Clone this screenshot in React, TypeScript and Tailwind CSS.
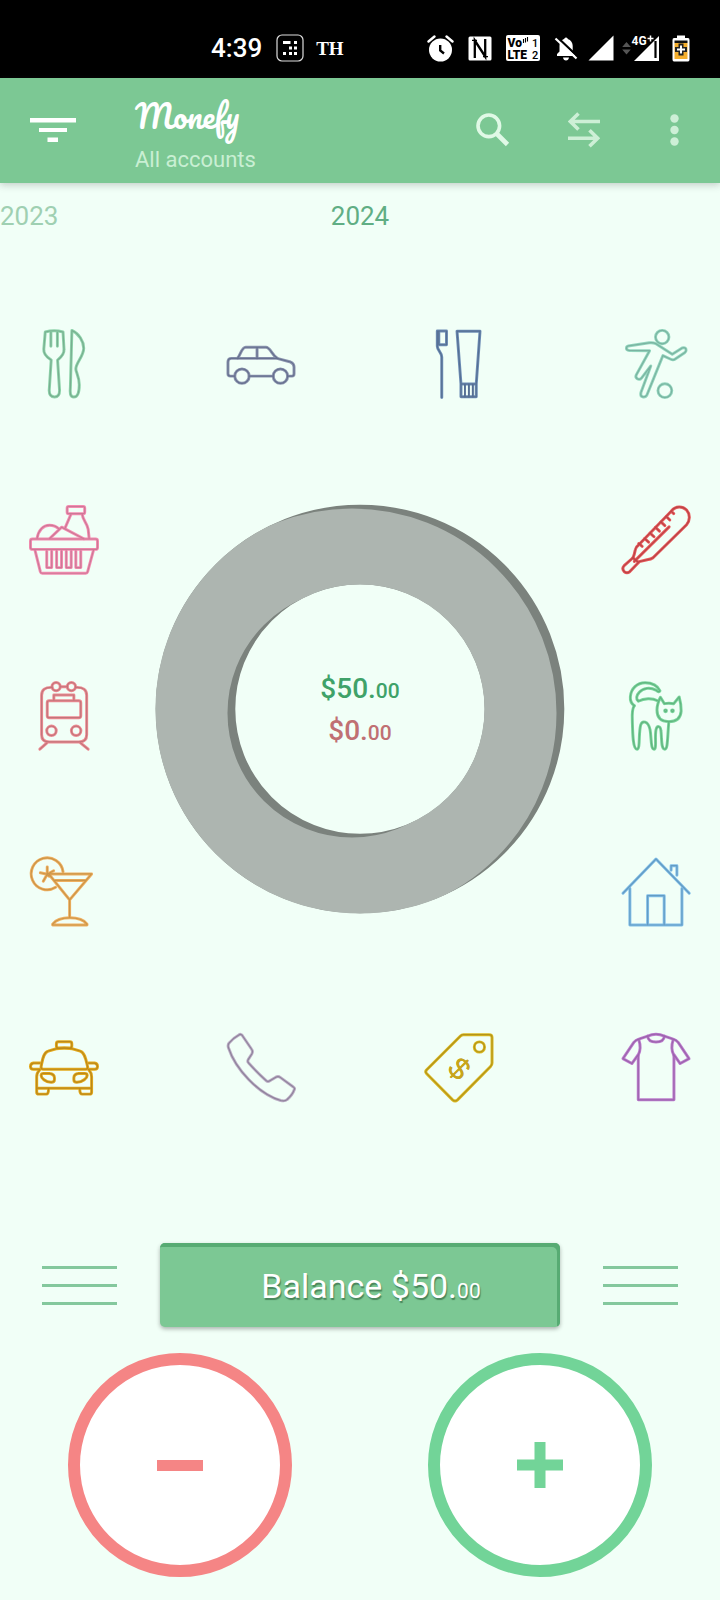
import type { ReactNode } from "react";

type IconProps = { label: string; light: string; dark: string; children: ReactNode };

function CategoryButton({ label, light, dark, children }: IconProps) {
  return (
    <button type="button" aria-label={label} className="block h-[70px] w-[70px] shrink-0">
      <svg viewBox="-0.5 -0.5 71 71" className="h-full w-full overflow-visible" fill="none" strokeLinecap="round" strokeLinejoin="round">
        <g stroke={light} strokeWidth="3">{children}</g>
        <g stroke={dark} strokeWidth="1.2">{children}</g>
      </svg>
    </button>
  );
}

function Food() {
  return (
    <CategoryButton label="Food" light="#8fd4ab" dark="#78ae90">
      <path d="M16 2.500Q25 0 34 2.500L35 20Q35.500 25.500 28.500 31L30.500 62Q30.500 68.500 25.500 68.500Q20 68.500 20 62L22 31Q14 26 14.500 20Z" />
      <path d="M21.700 3V17M28.300 3V17" />
      <path d="M43 1C50 4 55 12 55 19C55 27 47 34 47 40C47 43 50.500 48 50.500 56C50.500 64 49 68.500 45 68.500C41 68.500 41 64 41.500 58Z" />
    </CategoryButton>
  );
}

function Car() {
  return (
    <CategoryButton label="Car" light="#8e97b0" dark="#66708f">
      <path d="M8 47.300H4Q1.500 47.300 1.500 45V33Q1.500 29.300 5 29.300H51.300L65 33Q68.500 34.500 68.500 38V45Q68.500 47.300 66.500 47.300H62M23 47.300H47.400" />
      <path d="M11.300 29C14 26 15.500 18 19.500 18H40C44.500 18 46 26 51.300 29M31 18V29" />
      <circle cx="15.700" cy="47.300" r="7.300" />
      <circle cx="54.700" cy="47.300" r="7.300" />
    </CategoryButton>
  );
}

function Toiletry() {
  return (
    <CategoryButton label="Toiletry" light="#6e8eb6" dark="#566f93">
      <path d="M13 1.500H22.300V15.500H14.500V1.500M13 1.500V17C13 21 17.500 23 17.500 28V69" />
      <path d="M33 1.700H56.300L52.500 55.300V68.300H37V55.300Z M37 55.300H52.500" />
      <path d="M41 56V68M45 56V68M49 56V68" strokeWidth="1.800" />
    </CategoryButton>
  );
}

function Sports() {
  return (
    <CategoryButton label="Sports" light="#93d6be" dark="#7ab3a1">
      <circle cx="41.300" cy="7.700" r="6.800" />
      <circle cx="44" cy="62" r="7" />
      <path d="M7 16.700L28 13.500Q32 13 35 14.500L51.500 25L61.500 18.800Q65.500 17.500 65.500 21Q65.500 22.500 64 23.500L54.500 30Q52.500 31.500 50 30.200L42 26.500L26 66Q24.500 69 21.500 68.300Q18.800 67.500 19.700 64L29.700 37L20.500 49Q18.500 51.500 16 50Q13.800 48.500 15 46L28.500 21.500L8 21.300Q5 21 5 19Q5 17 7 16.700Z" />
    </CategoryButton>
  );
}

function Groceries() {
  return (
    <CategoryButton label="Groceries" light="#f48cb1" dark="#cd7896">
      <rect x="38.200" y="1" width="17.800" height="7.300" rx="1.500" />
      <path d="M42 9L36 23M53.500 9C54 15 58.500 18 59.500 24L60.500 33.500" />
      <path d="M7.700 33.300C9 25 14 20 20.300 20C24 20 27 21 29.500 23.500M20.500 33.500L32.700 22L55 33.700" />
      <rect x="1" y="34" width="68" height="10.500" rx="2" />
      <path d="M5.500 45L11 67Q11.500 68.700 13 68.700H57Q58.500 68.700 59 67L65 45" />
      <path d="M17.500 46V63H22.500V46M27.500 46V63H32.500V46M37.300 46V63H42.300V46M47 46V63H52V46" />
    </CategoryButton>
  );
}

function Health() {
  return (
    <CategoryButton label="Health" light="#e8595b" dark="#bb4447">
      <path d="M17.300 40L50.700 5.500C55 0 62 .5 66 4.500C70 9 69.500 15.500 66 19.500L32 53Q30 54.500 26 55L18 57L8.500 67Q5.500 69.500 2.700 67Q0 64 2.700 61L11.700 53Q13 50 14 45Q14.500 42 17.300 40Z" />
      <path d="M48.300 21.700L13 56.700M11.500 53L17 57.500" />
      <path d="M17.500 38.500L21 41.500M23.500 33.500L27.500 37.200M29 28L33 31.700M34.500 22.200L38.500 26M40 16.700L44 20.400M45.500 11.200L49 14.700M50.500 6L53 8.200" />
    </CategoryButton>
  );
}

function Transport() {
  return (
    <CategoryButton label="Transport" light="#ee8b92" dark="#c2757b">
      <path d="M23 6Q12.300 5.500 12.300 14V54Q12.300 61.300 20 61.300H50Q58 61.300 58 54V14Q58 5.500 47 6M31.300 5.300H38.300" />
      <circle cx="27" cy="5.200" r="4.200" />
      <circle cx="42.500" cy="5.200" r="4.200" />
      <path d="M24.700 19V13.700H45V19" />
      <rect x="18" y="19.500" width="34" height="17.200" rx="2" />
      <circle cx="22.300" cy="50" r="4.800" />
      <circle cx="47.300" cy="50" r="4.800" />
      <path d="M17.700 62.300L10.500 68.700M51.700 62.300L59.500 68.700" />
    </CategoryButton>
  );
}

function Pets() {
  return (
    <CategoryButton label="Pets" light="#7ad59c" dark="#62b580">
      <path d="M13 24.500C9.500 22 8.700 19 9 15.500C9.500 7 16 1.200 24 1.200C31 1.200 37 4.500 39 9.500Q38 11.500 35 8.800C29 5.500 22 6.500 18 11C15 14 14.500 18 17 20C23 17 31 16.500 36.500 19.500" />
      <path d="M13 24.500C10.500 28 10.700 34 11 40C11.300 52 11.500 68.700 15.700 68.700C19.300 68.700 17 53 19.500 44C21 39.500 27 39.500 29 49C30.500 57 29.500 68.700 33 68.700C36 68.700 33.500 56 35 49C36 44.500 39.500 44.500 40 50C41 58 40 68.700 44 68.700C47 68.700 46.500 58 48 41" />
      <path d="M39.500 16L43.500 22.500Q48 21.500 53 22.500L58.500 15.700C60 21 60.700 25 60.500 30C60 37 56 40.700 48 40.700C40.500 40.700 36 37 36 29C36 24 37.500 20 39.500 16Z" />
      <circle cx="44.700" cy="29.700" r="0.900" />
      <circle cx="51.700" cy="29.700" r="0.900" />
    </CategoryButton>
  );
}

function Drinks() {
  return (
    <CategoryButton label="Drinks" light="#efb060" dark="#cc9548">
      <path d="M34 14.500A16.200 16.200 0 1 0 26.500 30.300" />
      <path d="M18 17V9.500M18 17L11 15.500M18 17L14 24M18 17L24.500 13.500M18 17L20 19" />
      <path d="M19.500 16.700H63L40.700 43L19.500 16.700M25.500 23.300H57M40.700 43V60.700" />
      <path d="M23.500 67.500C30 59 52 59 58.300 67.500V68.500H23.500Z" />
    </CategoryButton>
  );
}

function House() {
  return (
    <CategoryButton label="House" light="#80bfe8" dark="#649bc4">
      <path d="M1.500 36.300L35 1.500L68.700 36.300M8.500 31.500V68.500H61.300V31.500" />
      <path d="M26.500 68V38.700H43.300V68M50.300 13V8.300H56.200V18" />
    </CategoryButton>
  );
}

function Taxi() {
  return (
    <CategoryButton label="Taxi" light="#e4aa1c" dark="#bb881a">
      <rect x="27.300" y="8.300" width="15.600" height="6.500" rx="2" />
      <path d="M11.700 34C13 28 13.500 19.500 19 17.800C29 14 41.500 14 51.500 17.800C56.500 19.500 57.500 28 59 34Q59 36.300 57 36.300H14Q11.700 36.300 11.700 34Z" />
      <path d="M10.500 30H4Q1 30.500 1 33.500Q1 36.300 4 36.300H10M60 30H66Q69 30.500 69 33.500Q69 36.300 66 36.300H60" />
      <path d="M10.500 36.500Q7.300 40 7.300 44V55.500H63V44Q63 40 60 36.500M7.300 55V59.500Q7.300 61.500 9.500 61.500H17Q19.300 61.500 19.300 56M63 55V59.500Q63 61.500 61 61.500H53.500Q51 61.500 51 56" />
      <path d="M14 40.500H20Q25.300 41 25.300 45V47Q25.300 49.500 22 49.500C16 49.500 11.800 45 11.800 42.500Q12 40.500 14 40.500ZM56 40.500H50Q45 41 45 45V47Q45 49.500 48 49.500C54 49.500 58.500 45 58.500 42.500Q58.500 40.500 56 40.500Z" />
    </CategoryButton>
  );
}

function Phone() {
  return (
    <CategoryButton label="Communications" light="#bdb0c6" dark="#8f829c">
      <path d="M12.500 1.500Q14.500 0 16 2L25.500 16Q27 18 25.800 20.500L22 26.500Q21 28.500 22.500 30Q31 39.500 40.500 48Q42 49.300 44 48L50 44.300Q52.500 43 54.500 44.500L67.500 54Q70 55.500 68.500 57.500Q67 62 61.500 67Q59.500 69 55 68C32 61 9 36 2 14.500Q1 11.500 2.800 9.500Q7 4.500 12.500 1.500Z" />
    </CategoryButton>
  );
}

function Bills() {
  return (
    <CategoryButton label="Bills" light="#dcba20" dark="#b3941c">
      <path d="M39.500 1.200H65.500Q68.500 1.200 68.500 4V30Q68.500 32 67 33.500L33.500 67.300Q31 69.500 28.500 67.300L2 40.500Q.5 38.700 2 37L36.500 2.500Q37.800 1.200 39.500 1.200Z" />
      <circle cx="55.700" cy="13.700" r="5.200" />
      <text x="35" y="46" transform="rotate(45 35 36)" textAnchor="middle" fontFamily="Liberation Sans" fontSize="31" fill="#c7a51b" stroke="none">$</text>
    </CategoryButton>
  );
}

function Clothes() {
  return (
    <CategoryButton label="Clothes" light="#bd7dce" dark="#9c64ad">
      <path d="M26.500 2.700Q35 -1.300 43.500 2.700Q43 8.700 35 8.700Q27 8.700 26.500 2.700Z" />
      <path d="M26.500 2.700L17.500 5.700Q14.500 6.500 12.500 9L1.500 25.500L10.500 30.500L17 21.500V67.300H53.200V21.500L59.500 30.500L68.500 25.500L57.500 9Q55.500 6.500 52.500 5.700L43.500 2.700" />
      <path d="M17.500 6Q20.500 15 17 22M52.500 6Q49.500 15 53 22" />
    </CategoryButton>
  );
}

function StatusBar() {
  return (
    <div className="flex h-[78px] items-center bg-black pt-[18px] pr-[30px] pl-[211px] text-white">
      <span className="text-[26px] leading-none font-medium">4:39</span>
      <svg viewBox="0 0 28 28" className="ml-[14px] h-7 w-7" fill="#fff">
        <rect x="1" y="1" width="26" height="26" rx="5" fill="none" stroke="#ddd" strokeWidth="1.200" />
        <path d="M7 7h7.500v3H7zM18 7h3v3h-3zM13 12.500h3v3h-3zM18 12.500h3v3h-3zM7 18h3v3H7zM13 18h3v3h-3zM18 18h3v3h-3z" />
      </svg>
      <span className="ml-3 font-['Liberation_Serif',serif] text-[19px] leading-none font-bold">TH</span>
      <div className="ml-auto flex items-center gap-[10px]">
        <div className="flex items-center gap-[14px]">
          <svg viewBox="0 0 27 27" className="h-[27px] w-[27px]">
            <circle cx="13.500" cy="15" r="11.500" fill="#fff" />
            <path d="M1.500 6.500L7.500 1.500M25.500 6.500L19.500 1.500" stroke="#fff" strokeWidth="2.400" strokeLinecap="round" />
            <path d="M13.200 10V15.500L17 18.500" stroke="#000" strokeWidth="2.400" fill="none" />
          </svg>
          <svg viewBox="0 0 24 25" className="h-[25px] w-6" fill="none">
            <rect x=".5" y=".5" width="23" height="24" rx="1.500" fill="#fff" />
            <path d="M6.800 22V4.500L17.200 20.500V3" stroke="#000" strokeWidth="2.300" />
            <path d="M4 4.300L9 4.300M15 20.700H20" stroke="#000" strokeWidth="1.300" />
          </svg>
          <svg viewBox="0 0 34 26" className="h-[26px] w-[34px]" fontFamily="Roboto" fontWeight="900" fill="#000">
            <rect width="34" height="26" rx="2" fill="#fff" />
            <text x="1.500" y="11.500" fontSize="12">Vo</text>
            <path d="M17.500 4v4M19.500 3v4.500M21.500 2v4.500" stroke="#000" strokeWidth="1.100" />
            <text x="1.500" y="23.500" fontSize="12">LTE</text>
            <text x="26" y="11.500" fontSize="11" fontWeight="500">1</text>
            <text x="26" y="23.500" fontSize="11" fontWeight="500">2</text>
          </svg>
          <svg viewBox="0 0 24 25" className="h-[25px] w-6">
            <path d="M3 20V18L5.500 15.500V10C5.500 6 8 3.700 10.300 3V2.500Q12 .5 13.700 2.500V3C17 4 18.700 7 18.700 10V15.500L21 18V20ZM9 21.500H15Q14.500 24.500 12 24.500Q9.500 24.500 9 21.500Z" fill="#fff" />
            <path d="M3 1L24 21" stroke="#000" strokeWidth="2.400" />
            <path d="M1.500 2.500L22.500 22.500" stroke="#fff" strokeWidth="2.200" />
          </svg>
        </div>
        <div className="flex items-center gap-2">
          <svg viewBox="0 0 26 26" className="h-[26px] w-[26px]">
            <path d="M25.500 .5V25.500H.5Z" fill="#fff" />
          </svg>
          <svg viewBox="0 0 37 26" className="h-[26px] w-[37px] overflow-visible">
            <path d="M4.500 7L8.800 12H.2ZM4.500 19.500L8.800 14.500H.2Z" fill="#555" />
            <path d="M37 1V26H12Z" fill="#fff" />
            <path d="M33.500 6V23" stroke="#000" strokeWidth="2.200" />
            <path d="M8 0H29.500V4.500L25 10.500H8Z" fill="#000" />
            <text x="9.500" y="10" fontFamily="Roboto" fontSize="12" fontWeight="700" fill="#fff">4G</text>
            <path d="M25.500 3.500h6M28.500 .5v6" stroke="#fff" strokeWidth="1.500" />
          </svg>
        </div>
        <svg viewBox="0 0 18 27" className="ml-[3px] h-[27px] w-[18px]">
          <path d="M5 .5H13V3H16Q17.500 3 17.500 5V24.500Q17.500 26.500 16 26.500H2Q.5 26.500 .5 24.500V5Q.5 3 2 3H5Z" fill="#fff" />
          <path d="M2.500 8H15.500V24H2.500Z" fill="#f5ae2c" />
          <path d="M2.500 5.500H15.500V8H2.500Z" fill="#111" />
          <path d="M6.500 8.500H11.500V12H15V17H11.500V20.500H6.500V17H3V12H6.500Z" fill="#222" />
          <path d="M8 10.500H10V13.500H13V15.500H10V18.500H8V15.500H5V13.500H8Z" fill="#fff" />
        </svg>
      </div>
    </div>
  );
}

function Header() {
  return (
    <header className="flex h-[105px] items-center bg-[#7cc894] pr-[41px] pb-[2px] pl-[30px] shadow-[0_2px_7px_rgba(60,60,60,0.25)]">
      <button type="button" aria-label="Filter">
        <svg viewBox="0 0 46 24" className="block h-6 w-[46px]" fill="#fff">
          <path d="M0 0H46V4.500H0ZM9 10H37V14H9ZM17.500 19.500H28V24H17.500Z" />
        </svg>
      </button>
      <div className="ml-[59px] flex flex-col pt-[9px]">
        <h1 className="font-['Pacifico','Liberation_Serif',cursive] text-[31px] leading-[52px] text-white">Monefy</h1>
        <p className="text-[22px] leading-[36px] text-[#c9efd3]">All accounts</p>
      </div>
      <div className="ml-auto flex items-center">
        <button type="button" aria-label="Search">
          <svg viewBox="0 0 34 34" className="block h-[34px] w-[34px]" fill="none" stroke="#e0f9e6">
            <circle cx="12.800" cy="12.800" r="10.800" strokeWidth="3.600" />
            <path d="M20.500 20.500L31.500 31.500" strokeWidth="4.600" />
          </svg>
        </button>
        <button type="button" aria-label="Transfer" className="ml-[58px]">
          <svg viewBox="0 0 32 36" className="block h-9 w-8" fill="none" stroke="#cdefd6" strokeWidth="3.600">
            <path d="M32 9.500H2M10.500 1.500L2.300 9.500L10.500 17.500M0 26.300H30M21.500 18.300L29.700 26.300L21.500 34.300" />
          </svg>
        </button>
        <button type="button" aria-label="More options" className="ml-[70px]">
          <svg viewBox="0 0 9 32" className="block h-8 w-[9px]" fill="#cdefd6">
            <circle cx="4.500" cy="4.500" r="4.200" />
            <circle cx="4.500" cy="16" r="4.200" />
            <circle cx="4.500" cy="27.500" r="4.200" />
          </svg>
        </button>
      </div>
    </header>
  );
}

function Money({ whole, cents, className }: { whole: string; cents: string; className: string }) {
  return (
    <span className={className}>
      {whole}.<span className="text-[21px] leading-none">{cents}</span>
    </span>
  );
}

function Donut() {
  return (
    <div className="relative h-[410px] w-[410px] shrink-0">
      <svg viewBox="-205 -204 410 410" className="h-full w-full overflow-visible" aria-hidden="true">
        <clipPath id="ring">
          <path clipRule="evenodd" d="M-204.500 0A204.500 204.500 0 1 1 204.500 0A204.500 204.500 0 1 1 -204.500 0ZM-124.500 0A124.500 124.500 0 1 1 124.500 0A124.500 124.500 0 1 1 -124.500 0Z" />
        </clipPath>
        <circle r="164.500" fill="none" stroke="#7b827d" strokeWidth="79.600" />
        <g clipPath="url(#ring)">
          <circle cx="-8" cy="4" r="164.500" fill="none" stroke="#adb5b0" strokeWidth="80" />
        </g>
      </svg>
      <div className="absolute inset-0 flex flex-col items-center justify-center font-medium">
        <Money whole="$50" cents="00" className="text-[28px] leading-[42px] text-[#3fa269]" />
        <Money whole="$0" cents="00" className="text-[28px] leading-[42px] text-[#c07073]" />
      </div>
    </div>
  );
}

function MenuLines({ label }: { label: string }) {
  return (
    <button type="button" aria-label={label} className="flex w-[75px] flex-col gap-[15px]">
      <span className="h-[3px] bg-[#84c89d]" />
      <span className="h-[3px] bg-[#84c89d]" />
      <span className="h-[3px] bg-[#84c89d]" />
    </button>
  );
}

export default function App() {
  return (
    <div className="flex min-h-screen flex-col bg-[#f1fff7] font-['Roboto',sans-serif]">
      <StatusBar />
      <Header />
      <nav className="grid h-[66px] grid-cols-3 items-center text-[26px] leading-none">
        <a href="#2023" className="text-[#9fd0b2]">2023</a>
        <a href="#2024" className="text-center text-[#60ae84]">2024</a>
      </nav>
      <main className="flex flex-col gap-[106px] px-[29px] pt-20">
        <div className="flex justify-between">
          <Food />
          <Car />
          <Toiletry />
          <Sports />
        </div>
        <div className="flex items-start justify-between">
          <div className="flex flex-col gap-[106px]">
            <Groceries />
            <Transport />
            <Drinks />
          </div>
          <Donut />
          <div className="flex flex-col gap-[106px]">
            <Health />
            <Pets />
            <House />
          </div>
        </div>
        <div className="flex justify-between">
          <Taxi />
          <Phone />
          <Bills />
          <Clothes />
        </div>
      </main>
      <footer className="mt-[140px] pb-[23px]">
        <div className="flex items-center justify-between px-[42px]">
          <MenuLines label="Categories" />
          <button
            type="button"
            className="h-[84px] w-[400px] rounded-[5px] bg-[#7cc894] pt-[3px] pl-[22px] text-white shadow-[inset_-3px_4px_0_#57ab73,0_2px_4px_rgba(0,0,0,0.3)]"
          >
            <Money whole="Balance $50" cents="00" className="text-[34px] leading-none [text-shadow:1px_2px_1px_rgba(40,90,55,0.6)]" />
          </button>
          <MenuLines label="Transactions" />
        </div>
        <div className="mt-[26px] grid grid-cols-2 justify-items-center">
          <button type="button" aria-label="Add expense" className="flex h-[224px] w-[224px] items-center justify-center rounded-full border-12 border-[#f58585] bg-white">
            <span className="h-[11px] w-[46px] bg-[#f58585]" />
          </button>
          <button type="button" aria-label="Add income" className="flex h-[224px] w-[224px] items-center justify-center rounded-full border-12 border-[#72d498] bg-white">
            <svg viewBox="0 0 46 46" className="h-[46px] w-[46px]" fill="#72d498">
              <path d="M0 17.500H17.500V0H28.500V17.500H46V28.500H28.500V46H17.500V28.500H0Z" />
            </svg>
          </button>
        </div>
      </footer>
    </div>
  );
}
